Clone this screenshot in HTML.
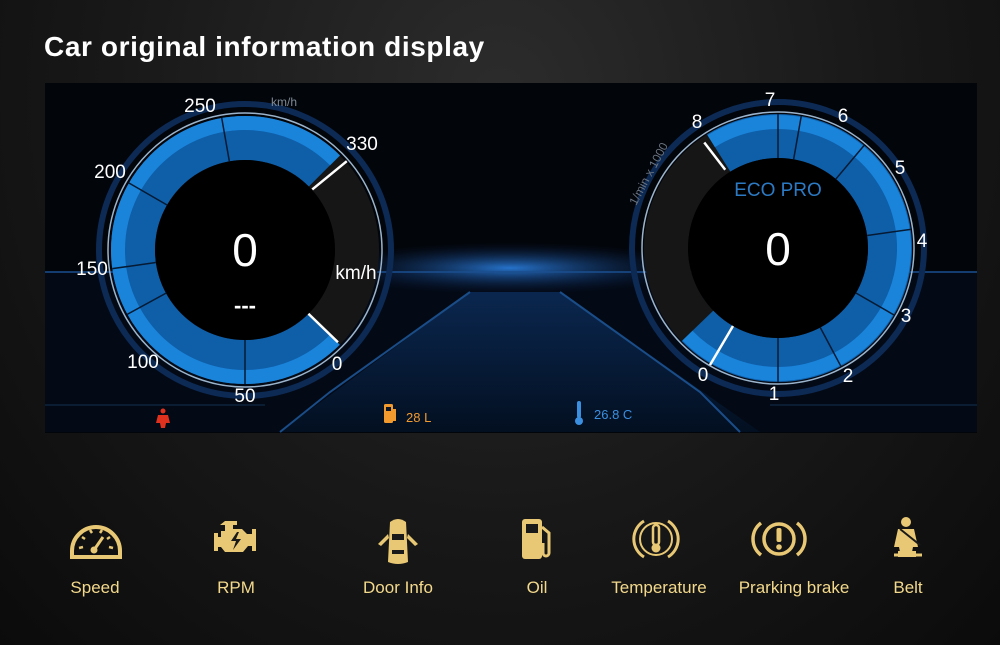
<!DOCTYPE html>
<html><head><meta charset="utf-8"><style>
html,body{margin:0;padding:0}
body{width:1000px;height:645px;overflow:hidden;background:radial-gradient(ellipse at 50% 15%,#2c2c2c 0%,#181818 55%,#0b0b0b 100%);font-family:"Liberation Sans",Arial,sans-serif;position:relative}
h1{position:absolute;left:44px;top:31px;margin:0;font-size:28px;font-weight:bold;color:#fff;letter-spacing:0.6px}
.lbl{position:absolute;top:578px;font-size:17px;color:#f3d98c;white-space:nowrap;transform:translateX(-50%)}
.ic{position:absolute;top:515px}
</style></head><body>
<h1>Car original information display</h1>
<svg style="position:absolute;left:45px;top:83px" width="932" height="350" viewBox="45 83 932 350">
<defs>
<radialGradient id="glow" cx="0.5" cy="0.5" r="0.5"><stop offset="0" stop-color="#2a7fe0" stop-opacity="0.9"/><stop offset="1" stop-color="#0a1a40" stop-opacity="0"/></radialGradient>
<linearGradient id="floor" x1="0" y1="0" x2="0" y2="1"><stop offset="0" stop-color="#0b2a55"/><stop offset="1" stop-color="#031022"/></linearGradient>
</defs>
<rect x="45" y="83" width="932" height="350" fill="#02050a"/>
<rect x="45" y="272" width="932" height="160" fill="#030a16"/>
<polygon points="470,292 560,292 760,432 280,432" fill="url(#floor)" opacity="0.9"/>
<ellipse cx="510" cy="268" rx="190" ry="26" fill="url(#glow)"/>
<line x1="45" y1="272" x2="977" y2="272" stroke="#1b4f8f" stroke-width="1.5"/>
<polyline points="470,292 330,392 280,432" fill="none" stroke="#1a4d88" stroke-width="2"/>
<polyline points="560,292 700,392 740,432" fill="none" stroke="#1a4d88" stroke-width="2"/>
<line x1="45" y1="405" x2="265" y2="405" stroke="#13304f"/>
<line x1="770" y1="405" x2="977" y2="405" stroke="#13304f"/>
<g transform="translate(245,250)">
<circle r="146" fill="none" stroke="#0d2a55" stroke-width="6"/>
<circle r="112" fill="none" stroke="#161616" stroke-width="44"/>
<circle r="112" fill="none" stroke="#0e5ea8" stroke-width="44" stroke-dasharray="527.8 1000" transform="rotate(45)"/>
<circle r="127" fill="none" stroke="#1a84da" stroke-width="14" stroke-dasharray="598.5 1000" transform="rotate(45)"/>
<circle r="137" fill="none" stroke="#9bb4cc" stroke-width="1.5"/>
<circle r="90" fill="#000"/>
<g stroke="#061a33" stroke-width="1.5">
<line x1="0" y1="90" x2="0" y2="134"/>
<line x1="-70" y1="56" x2="-105" y2="84" transform="rotate(10)"/>
<line x1="-90" y1="0" x2="-134" y2="0" transform="rotate(-8)"/>
<line x1="-90" y1="0" x2="-134" y2="0" transform="rotate(30)"/>
<line x1="-90" y1="0" x2="-134" y2="0" transform="rotate(80)"/>
</g>
<line x1="60" y1="67" x2="88" y2="97" stroke="#fff" stroke-width="2.5" transform="rotate(-3)"/>
<line x1="64" y1="-64" x2="97" y2="-94" stroke="#fff" stroke-width="2.5" transform="rotate(3)"/>
<text x="0" y="16" fill="#fff" font-size="46" text-anchor="middle">0</text>
<text x="0" y="63" fill="#fff" font-size="22" text-anchor="middle" font-weight="bold">---</text>
</g>
<g fill="#fff" font-size="19" text-anchor="middle">
<text x="200" y="112">250</text><text x="362" y="150">330</text><text x="110" y="178">200</text>
<text x="92" y="275">150</text><text x="143" y="368">100</text><text x="245" y="402">50</text><text x="337" y="370">0</text>
<text x="356" y="279">km/h</text>
</g>
<text x="284" y="106" fill="#7f8a96" font-size="12" text-anchor="middle">km/h</text>
<g transform="translate(778,248)">
<circle r="146" fill="none" stroke="#0d2a55" stroke-width="6"/>
<circle r="112" fill="none" stroke="#161616" stroke-width="44"/>
<circle r="112" fill="none" stroke="#0e5ea8" stroke-width="44" stroke-dasharray="504 1000" transform="rotate(238)"/>
<circle r="126" fill="none" stroke="#1a84da" stroke-width="14" stroke-dasharray="567 1000" transform="rotate(238)"/>
<circle r="136" fill="none" stroke="#9bb4cc" stroke-width="1.5"/>
<circle r="90" fill="#000"/>
<g stroke="#061a33" stroke-width="1.5">
<line x1="0" y1="-90" x2="0" y2="-134"/><line x1="0" y1="90" x2="0" y2="134"/>
<line x1="90" y1="0" x2="134" y2="0" transform="rotate(-8)"/><line x1="90" y1="0" x2="134" y2="0" transform="rotate(-50)"/>
<line x1="90" y1="0" x2="134" y2="0" transform="rotate(30)"/><line x1="90" y1="0" x2="134" y2="0" transform="rotate(-80)"/>
<line x1="90" y1="0" x2="134" y2="0" transform="rotate(62)"/>
</g>
<line x1="-45" y1="78" x2="-68" y2="117" stroke="#fff" stroke-width="2.5"/>
<line x1="-50" y1="-80" x2="-70" y2="-108" stroke="#fff" stroke-width="2.5" transform="rotate(-2)"/>
<text x="0" y="17" fill="#fff" font-size="46" text-anchor="middle">0</text>
<text x="0" y="-52" fill="#2c7ac4" font-size="19" text-anchor="middle">ECO PRO</text>
</g>
<g fill="#fff" font-size="19" text-anchor="middle">
<text x="770" y="106">7</text><text x="843" y="122">6</text><text x="900" y="174">5</text><text x="922" y="247">4</text>
<text x="906" y="322">3</text><text x="848" y="382">2</text><text x="774" y="400">1</text><text x="703" y="381">0</text><text x="697" y="128">8</text>
</g>
<text x="0" y="0" fill="#6a7480" font-size="12" transform="translate(636,206) rotate(-62)">1/min x 1000</text>
<g fill="#e0301e"><circle cx="163" cy="411" r="2.5"/><path d="M158,415h10l2,8h-4l-1,5h-4l-1,-5h-4z"/></g>
<g fill="#f29a2e"><rect x="384" y="404" width="9" height="19" rx="1.5"/><rect x="393" y="409" width="3" height="12"/></g>
<rect x="386" y="407" width="5" height="4" fill="#0a1628"/>
<text x="406" y="422" fill="#f29a2e" font-size="13">28 L</text>
<g fill="#3b8fe0"><rect x="577" y="401" width="4" height="17" rx="2"/><circle cx="579" cy="421" r="4"/></g>
<text x="594" y="419" fill="#3b8fe0" font-size="13">26.8  C</text>
</svg>
<svg class="ic" style="left:68px" width="56" height="48" viewBox="0 0 56 48"><path d="M4,36 A24,24 0 0 1 52,36 L52,42 L4,42Z" fill="none" stroke="#e8c874" stroke-width="4"/><g stroke="#e8c874" stroke-width="2.5"><line x1="11" y1="33" x2="15" y2="32"/><line x1="14" y1="22" x2="17" y2="24"/><line x1="22" y1="15" x2="24" y2="18"/><line x1="34" y1="15" x2="32" y2="18"/><line x1="42" y1="22" x2="39" y2="24"/><line x1="45" y1="33" x2="41" y2="32"/><line x1="26" y1="35" x2="35" y2="22" stroke-width="3"/></g><circle cx="26" cy="35" r="3.5" fill="#e8c874"/></svg>
<svg class="ic" style="left:210px" width="52" height="48" viewBox="0 0 52 48"><path d="M15,6h12v4h-4v4h9l5,5h5v-5h4v22h-4v-5h-4l-5,6h-18l-4,-5h-3v4h-4v-18h4v4h3v-6h4v-6h-5z" fill="#e8c874"/><path d="M27,17l-6,9h5l-3,9l8,-11h-5l3,-7z" fill="#1a1a1a"/></svg>
<svg class="ic" style="left:372px;top:512px" width="52" height="56" viewBox="0 0 52 56"><path d="M18,10 Q26,4 34,10 L36,50 Q26,54 16,50Z" fill="#e8c874"/><path d="M16,22 L6,32 L9,34 L17,26Z M36,22 L46,32 L43,34 L35,26Z" fill="#e8c874"/><rect x="20" y="22" width="12" height="6" fill="#1a1a1a"/><rect x="20" y="38" width="12" height="4" fill="#1a1a1a"/></svg>
<svg class="ic" style="left:518px" width="40" height="50" viewBox="0 0 40 50"><rect x="4" y="4" width="20" height="40" rx="3" fill="#e8c874"/><rect x="8" y="9" width="12" height="9" fill="#1a1a1a"/><path d="M24,12 l7,6 v20 a3,3 0 0 1 -6,0 v-10" fill="none" stroke="#e8c874" stroke-width="3"/></svg>
<svg class="ic" style="left:632px" width="48" height="48" viewBox="0 0 48 48"><path d="M12,6 A21,21 0 0 0 12,42 M36,6 A21,21 0 0 1 36,42" fill="none" stroke="#e8c874" stroke-width="3"/><circle cx="24" cy="24" r="16" fill="none" stroke="#e8c874" stroke-width="2"/><rect x="21" y="10" width="6" height="20" rx="3" fill="none" stroke="#e8c874" stroke-width="2.5"/><circle cx="24" cy="33" r="4.5" fill="#e8c874"/></svg>
<svg class="ic" style="left:751px" width="56" height="48" viewBox="0 0 56 48"><path d="M10,8 A20,20 0 0 0 10,40 M46,8 A20,20 0 0 1 46,40" fill="none" stroke="#e8c874" stroke-width="3.5"/><circle cx="28" cy="24" r="15" fill="none" stroke="#e8c874" stroke-width="3.5"/><rect x="25.5" y="13" width="5" height="14" rx="2" fill="#e8c874"/><circle cx="28" cy="32" r="2.8" fill="#e8c874"/></svg>
<svg class="ic" style="left:888px" width="40" height="50" viewBox="0 0 40 50"><circle cx="18" cy="7" r="5" fill="#e8c874"/><path d="M10,14h16l4,18h-5l-2,10h-10l-2,-10h-5z" fill="#e8c874"/><path d="M12,14 L32,30" stroke="#1a1a1a" stroke-width="2"/><rect x="10" y="36" width="18" height="6" fill="#e8c874"/><path d="M6,40 h28" stroke="#e8c874" stroke-width="3"/></svg>
<div class="lbl" style="left:95px">Speed</div>
<div class="lbl" style="left:236px">RPM</div>
<div class="lbl" style="left:398px">Door Info</div>
<div class="lbl" style="left:537px">Oil</div>
<div class="lbl" style="left:659px">Temperature</div>
<div class="lbl" style="left:794px">Prarking brake</div>
<div class="lbl" style="left:908px">Belt</div>
</body></html>
